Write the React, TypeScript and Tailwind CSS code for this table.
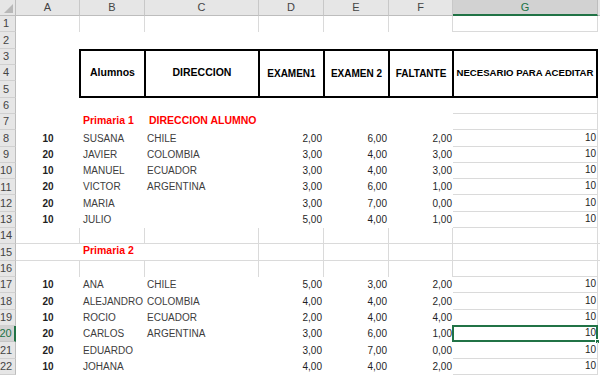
import React from 'react';

const GRID = 'border-[#dadada]';
const ROW_H = 'h-[16.32px]';

type RowData = {
  n: number;
  a?: string;
  b?: string;
  c?: string;
  d?: string;
  e?: string;
  f?: string;
  g?: string;
  red?: string;
  v?: 'all' | 'right' | 'none';
  bottom?: boolean;
  gb?: boolean;
  gr?: boolean;
  selected?: boolean;
};

const rows: RowData[] = [
  { n: 1, v: 'all', gb: true, gr: true },
  { n: 2 },
  { n: 6, gb: true, gr: true },
  { n: 7, gb: true, gr: true, b: 'Primaria 1', red: 'DIRECCION ALUMNO' },
  { n: 8, a: '10', b: 'SUSANA', c: 'CHILE', d: '2,00', e: '6,00', f: '2,00', g: '10', gb: true, gr: true },
  { n: 9, a: '20', b: 'JAVIER', c: 'COLOMBIA', d: '3,00', e: '4,00', f: '3,00', g: '10', gb: true, gr: true },
  { n: 10, a: '10', b: 'MANUEL', c: 'ECUADOR', d: '3,00', e: '4,00', f: '3,00', g: '10', gb: true, gr: true },
  { n: 11, a: '20', b: 'VICTOR', c: 'ARGENTINA', d: '3,00', e: '6,00', f: '1,00', g: '10', gb: true, gr: true },
  { n: 12, a: '20', b: 'MARIA', d: '3,00', e: '7,00', f: '0,00', g: '10', gb: true, gr: true },
  { n: 13, a: '10', b: 'JULIO', d: '5,00', e: '4,00', f: '1,00', g: '10', gb: true, gr: true },
  { n: 14, v: 'all', bottom: true, gr: true },
  { n: 15, v: 'right', bottom: true, gr: true, b: 'Primaria 2' },
  { n: 16, v: 'all', gb: true, gr: true },
  { n: 17, a: '10', b: 'ANA', c: 'CHILE', d: '5,00', e: '3,00', f: '2,00', g: '10', gb: true, gr: true },
  { n: 18, a: '20', b: 'ALEJANDRO', c: 'COLOMBIA', d: '4,00', e: '4,00', f: '2,00', g: '10', gb: true, gr: true },
  { n: 19, a: '10', b: 'ROCIO', c: 'ECUADOR', d: '2,00', e: '4,00', f: '4,00', g: '10', gb: true, gr: true },
  { n: 20, a: '20', b: 'CARLOS', c: 'ARGENTINA', d: '3,00', e: '6,00', f: '1,00', g: '10', gb: true, gr: true, selected: true },
  { n: 21, a: '20', b: 'EDUARDO', d: '3,00', e: '7,00', f: '0,00', g: '10', gb: true, gr: true },
  { n: 22, a: '10', b: 'JOHANA', d: '4,00', e: '4,00', f: '2,00', g: '10', gb: true, gr: true },
];

const RowHeader = ({ n, selected }: { n: number; selected?: boolean }) => (
  <div
    className={
      selected
        ? `${ROW_H} w-[16px] shrink-0 flex items-center justify-center pr-[3px] bg-[#d2d2d2] text-[#217346] border-b border-[#c6c6c6] border-r-2 border-r-[#217346] text-[11px]`
        : `${ROW_H} w-[16px] shrink-0 flex items-center justify-center pr-[3px] bg-[#e6e6e6] text-[#444444] border-b border-[#d0d0d0] border-r border-r-[#bdbdbd] text-[11px]`
    }
  >
    {n}
  </div>
);

const SheetRow = ({ r }: { r: RowData }) => {
  const vAll = r.v === 'all';
  const vRight = r.v === 'all' || r.v === 'right';
  const isRed = !!r.red || r.n === 15;
  return (
    <div className="flex">
      <RowHeader n={r.n} selected={r.selected} />
      <div className={`${ROW_H} w-[64px] shrink-0 flex items-end justify-center pb-px font-bold text-[10px] text-[#1f1f1f] ${vAll ? 'border-r ' + GRID : ''} ${r.bottom ? 'border-b ' + GRID : ''}`}>
        {r.a}
      </div>
      <div className={`${ROW_H} w-[65px] shrink-0 flex items-end pl-[3px] pb-px whitespace-nowrap ${vAll ? 'border-r ' + GRID : ''} ${r.bottom ? 'border-b ' + GRID : ''} ${isRed ? 'text-[10.5px] font-bold text-[#ff0000]' : 'text-[10px] text-[#3d3d3d]'}`}>
        {r.b}
      </div>
      <div className={`${ROW_H} w-[114px] shrink-0 flex items-end pb-px whitespace-nowrap ${vRight ? 'border-r ' + GRID : ''} ${r.bottom ? 'border-b ' + GRID : ''} ${r.red ? 'text-[10.5px] font-bold text-[#ff0000] pl-[4px]' : 'text-[10px] text-[#3d3d3d] pl-[2px]'}`}>
        {r.red ?? r.c}
      </div>
      <div className={`${ROW_H} w-[65px] shrink-0 flex items-end justify-end pr-[2px] pb-px text-[10px] text-[#1f1f1f] ${vRight ? 'border-r ' + GRID : ''} ${r.bottom ? 'border-b ' + GRID : ''}`}>
        {r.d}
      </div>
      <div className={`${ROW_H} w-[65px] shrink-0 flex items-end justify-end pr-[2px] pb-px text-[10px] text-[#1f1f1f] ${vRight ? 'border-r ' + GRID : ''} ${r.bottom ? 'border-b ' + GRID : ''}`}>
        {r.e}
      </div>
      <div className={`${ROW_H} w-[64px] shrink-0 flex items-end justify-end pr-[1px] pb-px text-[10px] text-[#1f1f1f] ${vRight ? 'border-r ' + GRID : ''} ${r.bottom ? 'border-b ' + GRID : ''}`}>
        {r.f}
      </div>
      <div className={`${ROW_H} relative w-[145px] shrink-0 flex items-end justify-end pr-[1px] pb-px text-[10px] text-[#1f1f1f] ${r.gr ? 'border-r ' + GRID : ''} ${r.gb || r.bottom ? 'border-b ' + GRID : ''}`}>
        {r.g}
        {r.selected && (
          <>
            <div className="absolute -left-px -top-px -right-px -bottom-px border-2 border-[#217346]" />
            <div className="absolute -right-[3px] -bottom-[3px] w-[5px] h-[5px] bg-[#217346] border border-white" />
          </>
        )}
      </div>
      <div className={`${ROW_H} flex-1 ${r.bottom ? 'border-b ' + GRID : ''}`} />
    </div>
  );
};

const headCell = 'h-full shrink-0 flex items-center justify-center font-bold text-black border-y-2 border-l-2 border-black whitespace-nowrap';

const HeaderTable = () => (
  <div className="flex">
    <div className="flex flex-col">
      <RowHeader n={3} />
      <RowHeader n={4} />
      <RowHeader n={5} />
    </div>
    <div className="flex h-[48.96px] flex-1">
      <div className="w-[63px] shrink-0" />
      <div className={`${headCell} w-[65px] text-[10.5px]`}>Alumnos</div>
      <div className={`${headCell} w-[114px] text-[10.5px]`}>DIRECCION</div>
      <div className={`${headCell} w-[65px] text-[10px]`}>EXAMEN1</div>
      <div className={`${headCell} w-[65px] text-[10px]`}>EXAMEN 2</div>
      <div className={`${headCell} w-[64px] text-[10px]`}>FALTANTE</div>
      <div className={`${headCell} w-[146px] border-r-2 text-[9.6px]`}>NECESARIO PARA ACEDITAR</div>
    </div>
  </div>
);

const ColHeader = ({ label, w, active }: { label: string; w: string; active?: boolean }) => (
  <div
    className={
      active
        ? `${w} h-full shrink-0 flex items-center justify-center bg-[#d2d2d2] text-[#217346] border-r border-[#bdbdbd] border-b-2 border-b-[#217346] text-[11px]`
        : `${w} h-full shrink-0 flex items-center justify-center bg-[#e6e6e6] text-[#444444] border-r border-[#c8c8c8] border-b border-b-[#bdbdbd] text-[11px]`
    }
  >
    {label}
  </div>
);

export default function App() {
  const top = rows.slice(0, 2);
  const rest = rows.slice(2);
  return (
    <div className="w-[600px] h-[375px] overflow-hidden bg-white" style={{ fontFamily: '"Liberation Sans", Arial, sans-serif' }}>
      <div className="flex h-[16px]">
        <div className="relative w-[16px] h-full shrink-0 bg-[#e6e6e6] border-r border-b border-[#bdbdbd]">
          <svg className="absolute right-[2px] bottom-[2px]" width="9" height="9" viewBox="0 0 9 9">
            <polygon points="9,0 9,9 0,9" fill="#b8b8b8" />
          </svg>
        </div>
        <ColHeader label="A" w="w-[64px]" />
        <ColHeader label="B" w="w-[65px]" />
        <ColHeader label="C" w="w-[114px]" />
        <ColHeader label="D" w="w-[65px]" />
        <ColHeader label="E" w="w-[65px]" />
        <ColHeader label="F" w="w-[64px]" />
        <ColHeader label="G" w="w-[145px]" active />
        <div className="flex-1 h-full bg-[#e6e6e6] border-b border-[#bdbdbd]" />
      </div>
      {top.map((r) => (
        <SheetRow key={r.n} r={r} />
      ))}
      <HeaderTable />
      {rest.map((r) => (
        <SheetRow key={r.n} r={r} />
      ))}
    </div>
  );
}
